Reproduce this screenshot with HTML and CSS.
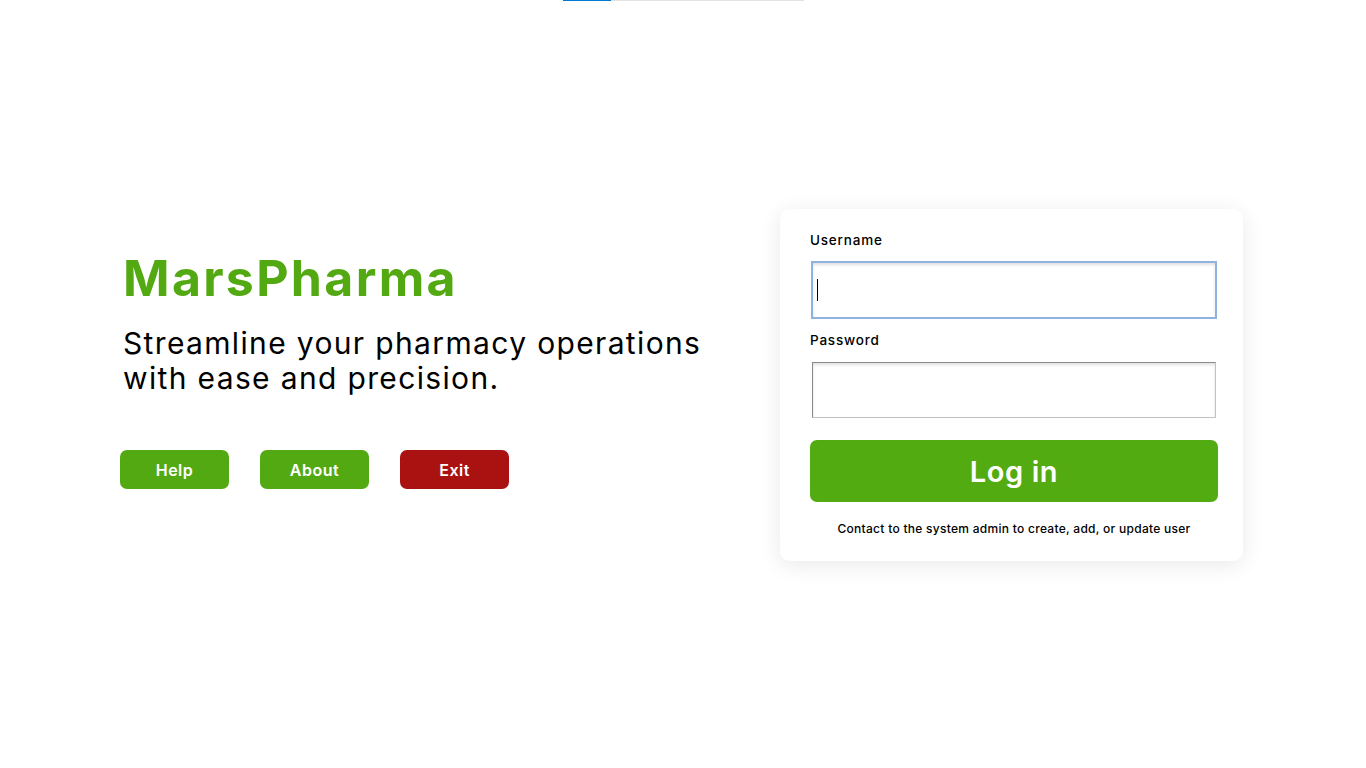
FILE: index.html
```html
<!DOCTYPE html>
<html lang="en">
<head>
<meta charset="utf-8">
<title>MarsPharma - Log in</title>
<link rel="stylesheet" href="styles.css">
</head>
<body>
<div class="progress"><div class="progress-fill"></div></div>
<main class="page">
  <section class="intro">
    <h1 class="brand">MarsPharma</h1>
    <p class="tagline">Streamline your pharmacy operations<br>with ease and precision.</p>
    <div class="actions">
      <button class="btn btn-green">Help</button>
      <button class="btn btn-green">About</button>
      <button class="btn btn-red">Exit</button>
    </div>
  </section>
  <form class="card">
    <label class="label">Username</label>
    <div class="field focused"><span class="caret"></span></div>
    <label class="label">Password</label>
    <div class="field last"></div>
    <button type="button" class="login">Log in</button>
    <p class="note">Contact to the system admin to create, add, or update user</p>
  </form>
</main>
</body>
</html>
```

FILE: styles.css
```css
html, body {
  margin: 0;
  padding: 0;
  background: #ffffff;
}
body {
  font-family: Inter, "Noto Sans", sans-serif;
  color: #000;
}
.progress {
  position: absolute;
  top: 0;
  left: 563px;
  width: 241px;
  height: 1px;
  background: #e3e3e3;
}
.progress-fill {
  width: 48px;
  height: 1px;
  background: #0078d4;
}
.page {
  height: 768px;
  display: flex;
  align-items: center;
  padding-left: 120px;
  box-sizing: border-box;
}
.intro {
  width: 660px;
  margin-top: -31px;
}
.brand {
  margin: 0 0 18px 3px;
  font-size: 50px;
  line-height: 60px;
  font-weight: 700;
  color: #53a912;
  letter-spacing: 2.3px;
}
.tagline {
  margin: 0 0 54px 3px;
  font-size: 30px;
  line-height: 35px;
  font-weight: 400;
  letter-spacing: 1.35px;
  white-space: nowrap;
}
.actions {
  display: flex;
  gap: 31px;
}
.btn {
  width: 109px;
  height: 39px;
  border: none;
  border-radius: 7px;
  color: #fff;
  font-family: inherit;
  font-size: 16px;
  font-weight: 600;
  letter-spacing: 0.5px;
  padding: 0;
}
.btn-green { background: #53a912; }
.btn-red { background: #aa1111; }
.card {
  width: 463px;
  box-sizing: border-box;
  padding: 21px 25px 24px 30px;
  background: #fff;
  border-radius: 10px;
  box-shadow: 0 4px 22px rgba(0, 0, 0, 0.09);
  display: flex;
  flex-direction: column;
  margin-top: 2px;
}
.label {
  display: block;
  font-size: 13.5px;
  line-height: 20px;
  font-weight: 500;
  letter-spacing: 0.8px;
  margin-bottom: 12px;
}
.field {
  height: 56px;
  margin: 0 2px 12px 2px;
  box-sizing: border-box;
  border: 1px solid;
  border-color: #8a8a8a #c2c2c2 #c2c2c2 #8a8a8a;
  box-shadow: inset 0 2px 3px rgba(0, 0, 0, 0.12);
  background: #fff;
  display: flex;
  align-items: center;
  padding-left: 4px;
}
.field.focused {
  outline: 2px solid #8fb3e0;
  outline-offset: -1px;
}
.field.last { margin-bottom: 22px; }
.caret {
  width: 1px;
  height: 22px;
  background: #000;
}
.login {
  height: 62px;
  border: none;
  border-radius: 7px;
  background: #53ab12;
  color: #fff;
  font-family: inherit;
  font-size: 29px;
  font-weight: 600;
  letter-spacing: 0.6px;
  padding: 0;
}
.note {
  margin: 19px 0 0 0;
  text-align: center;
  font-size: 12px;
  line-height: 16px;
  font-weight: 500;
  letter-spacing: 0.28px;
}
```
